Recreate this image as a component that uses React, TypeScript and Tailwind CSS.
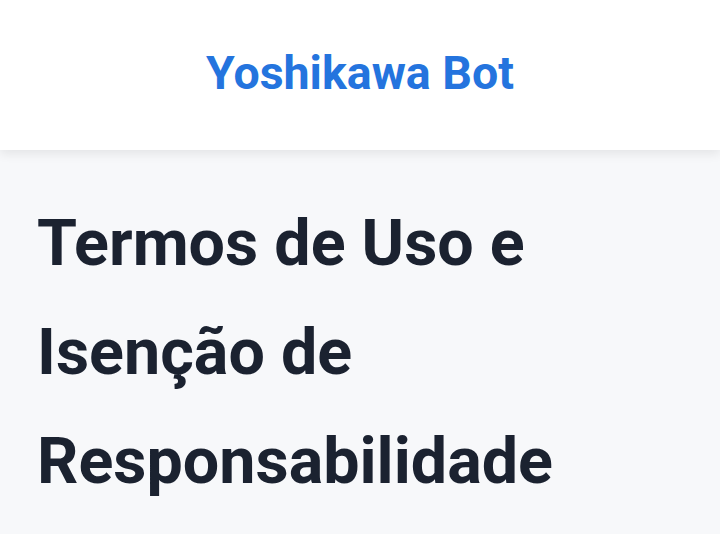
export default function App() {
  return (
    <div className="min-h-[534px] bg-[#f7f8fa] font-['Roboto','Liberation_Sans',sans-serif]">
      <header className="relative z-10 flex h-[150px] items-center justify-center bg-white pb-[5px] shadow-[0_4px_10px_rgba(0,0,0,0.08)]">
        <h1 className="text-[46.5px] font-bold leading-[46px] text-[#2474de]">Yoshikawa Bot</h1>
      </header>
      <main className="px-[37px] pt-[39px]">
        <h2 className="text-[64.6px] font-bold leading-[109px] text-[#1b2230]">
          Termos de Uso e Isenção de Responsabilidade
        </h2>
      </main>
    </div>
  );
}
